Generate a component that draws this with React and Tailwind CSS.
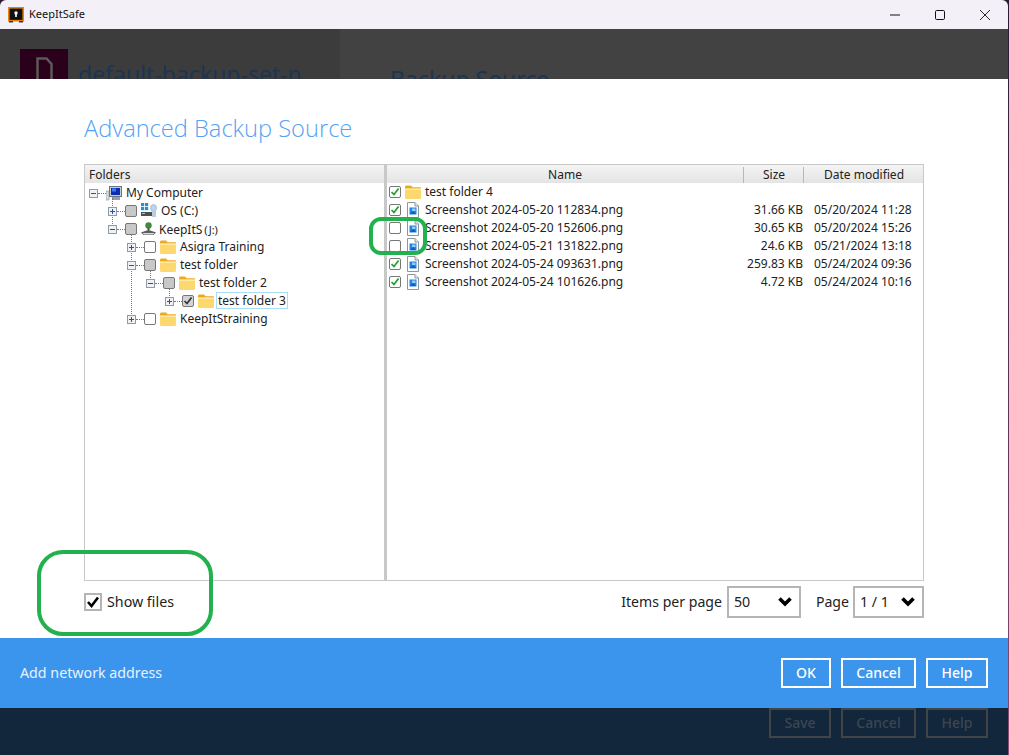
import React from "react";

function Expander({ open }) {
  return (
    <svg width="9" height="9" viewBox="0 0 9 9" className="relative shrink-0">
      <rect x="0.5" y="0.5" width="8" height="8" fill="#eef1f6" stroke="#8e9aa8" />
      <path d="M2 4.5H7" stroke="#2f4f9f" />
      {!open && <path d="M4.5 2V7" stroke="#2f4f9f" />}
    </svg>
  );
}

function Folder() {
  return (
    <svg width="16" height="14" viewBox="0 0 16 14" className="shrink-0">
      <path d="M0 2.2C0 1 .6.5 1.5.5H6l1.6 1.7H15c.6 0 1 .4 1 1V4H0Z" fill="#f0a91c" />
      <path d="M0 3.5H16V12.5C16 13.3 15.5 14 14.6 14H1.4C.5 14 0 13.3 0 12.5Z" fill="#fcd86f" />
      <path d="M0 3.5H16V5H0Z" fill="#ffe9a3" />
    </svg>
  );
}

function Computer() {
  return (
    <svg width="16" height="15" viewBox="0 0 16 15" className="shrink-0">
      <rect x="0" y="5" width="3" height="9" fill="#d8dde0" stroke="#7a8288" strokeWidth="0.5" />
      <rect x="3.5" y="0.5" width="12" height="10" fill="#c9ced4" stroke="#6c747b" />
      <rect x="5" y="2" width="9" height="7" fill="#0a2fb0" />
      <rect x="6" y="2.5" width="4" height="3" fill="#3f7fe8" />
      <rect x="6" y="11" width="8" height="3" fill="#9aa1a8" />
    </svg>
  );
}

function Drive() {
  return (
    <svg width="16" height="16" viewBox="0 0 16 16" className="shrink-0">
      <rect x="0" y="0" width="3.2" height="3.2" fill="#1f8fe0" />
      <rect x="4" y="0" width="3.2" height="3.2" fill="#1f8fe0" />
      <rect x="0" y="4" width="3.2" height="3.2" fill="#1f8fe0" />
      <rect x="4" y="4" width="3.2" height="3.2" fill="#1f8fe0" />
      <ellipse cx="12.5" cy="5" rx="3" ry="3.5" fill="#bfd4e6" stroke="#8fa6ba" strokeWidth="0.6" />
      <rect x="0" y="9" width="15" height="4" fill="#4a4f52" />
      <rect x="1" y="10" width="3" height="1" fill="#9be06a" />
      <rect x="11" y="7" width="4" height="7" fill="#b7cde0" />
    </svg>
  );
}

function NetDrive() {
  return (
    <svg width="15" height="15" viewBox="0 0 15 15" className="shrink-0">
      <circle cx="7.5" cy="3.5" r="3.2" fill="#3f8a3c" />
      <path d="M6.5 6H8.5V9H6.5Z" fill="#5a4a3a" />
      <path d="M0 10.5L5.5 8.5H9.5L15 10.5L12.5 13H2.5Z" fill="#5c5f60" />
      <path d="M1.5 11H13.5L12 12.5H3Z" fill="#d9dcdd" />
    </svg>
  );
}

function FileIcon() {
  return (
    <svg width="12" height="16" viewBox="0 0 12 16" className="shrink-0">
      <path d="M.5.5H8L11.5 4V15.5H.5Z" fill="#fff" stroke="#8b96a0" />
      <path d="M8 .5V4H11.5" fill="#e8ecef" stroke="#8b96a0" />
      <rect x="2.5" y="5.5" width="7" height="7" fill="#1f84e8" />
      <rect x="5" y="6.5" width="3.5" height="2.5" fill="#8fd0f8" />
      <path d="M3 12L6 9L9 12Z" fill="#1459c0" />
    </svg>
  );
}

function TreeCheck({ state }) {
  if (state === "partial") {
    return <span className="block w-3 h-3 shrink-0 rounded-[2px] border border-[#777] bg-[#c8c8c8]" />;
  }
  if (state === "dark") {
    return (
      <span className="flex items-center justify-center w-3 h-3 shrink-0 rounded-[2px] border border-[#777] bg-[#d4d4d4]">
        <svg width="10" height="10" viewBox="0 0 10 10"><path d="M1.5 5L4 7.5L8.5 1.5" fill="none" stroke="#333" strokeWidth="1.7" /></svg>
      </span>
    );
  }
  if (state === "green") {
    return (
      <span className="flex items-center justify-center w-3 h-3 shrink-0 rounded-[2px] border border-[#777] bg-white">
        <svg width="10" height="10" viewBox="0 0 10 10"><path d="M1.5 5L4 7.5L8.5 1.5" fill="none" stroke="#1f9d2e" strokeWidth="1.7" /></svg>
      </span>
    );
  }
  return <span className="block w-3 h-3 shrink-0 rounded-[2px] border border-[#777] bg-white" />;
}

function TreeRow({ pad, open, check, icon, label, selected, noCheck, tight }) {
  return (
    <div className="flex items-center h-[18px]" style={{ paddingLeft: pad }}>
      <Expander open={open} />
      <span className="w-2 shrink-0 border-t border-dotted border-[#777]" />
      {!noCheck && <TreeCheck state={check} />}
      {noCheck ? null : <span className="w-1 shrink-0" />}
      {icon}
      {selected ? (
        <span className="ml-[2px] -mt-[1px] px-[1px] h-[17px] leading-[15px] border border-[#a9dcf5] whitespace-nowrap">{label}</span>
      ) : tight ? (
        <span className="ml-[3px] mt-[2px] whitespace-nowrap">{label}</span>
      ) : (
        <span className="ml-1 whitespace-nowrap">{label}</span>
      )}
    </div>
  );
}

function FileRow({ check, name, size, date, folder }) {
  return (
    <div className="flex items-center h-[18px]">
      <div className="flex items-center w-[357px] pl-[2px]">
        <TreeCheck state={check} />
        {folder ? (
          <span className="ml-1 mr-1"><Folder /></span>
        ) : (
          <span className="ml-[6px] mr-[6px]"><FileIcon /></span>
        )}
        <span className="whitespace-nowrap">{name}</span>
      </div>
      <div className="w-[59px] text-right whitespace-nowrap">{size}</div>
      <div className="flex-1 pl-[11px] whitespace-nowrap">{date}</div>
    </div>
  );
}

function Select({ value, width }) {
  return (
    <div className={`flex items-center justify-between h-8 border-2 border-[#b5b5b5] pl-[5px] pr-[7px] ${width}`}>
      <span>{value}</span>
      <svg width="14" height="10" viewBox="0 0 14 10"><path d="M1.5 1.5L7 7L12.5 1.5" fill="none" stroke="#000" strokeWidth="3.6" /></svg>
    </div>
  );
}

const files = [
  ["green", "Screenshot 2024-05-20 112834.png", "31.66 KB", "05/20/2024 11:28"],
  ["empty", "Screenshot 2024-05-20 152606.png", "30.65 KB", "05/20/2024 15:26"],
  ["empty", "Screenshot 2024-05-21 131822.png", "24.6 KB", "05/21/2024 13:18"],
  ["green", "Screenshot 2024-05-24 093631.png", "259.83 KB", "05/24/2024 09:36"],
  ["green", "Screenshot 2024-05-24 101626.png", "4.72 KB", "05/24/2024 10:16"],
];

export default function App() {
  return (
    <div className="relative flex w-[1009px] h-[755px] overflow-hidden bg-gradient-to-b from-[#2a1a35] to-[#8c4a72] font-['Noto_Sans',sans-serif] text-[#222]">
      <div className="flex flex-col w-[1008px] h-full rounded-t-[6px] overflow-hidden">
        {/* title bar */}
        <div className="flex items-center h-[29px] shrink-0 bg-[#f4f0f8] pl-2">
          <svg width="16" height="16" viewBox="0 0 16 16" className="shrink-0">
            <rect x="0.8" y="0.8" width="14.4" height="12.9" fill="#111" stroke="#e8820c" strokeWidth="1.6" />
            <path d="M1 14H5V15.5H1ZM11 14H15V15.5H11Z" fill="#333" />
            <circle cx="8" cy="6" r="1.7" fill="#fff" />
            <rect x="7.2" y="6.5" width="1.6" height="3.5" fill="#fff" />
          </svg>
          <span className="ml-[5px] text-[11px] text-[#111]">KeepItSafe</span>
          <div className="ml-auto flex items-center gap-[35px] pr-[18px]">
            <svg width="10" height="10" viewBox="0 0 10 10"><path d="M0 5H10" stroke="#111" strokeWidth="1" /></svg>
            <svg width="10" height="10" viewBox="0 0 10 10"><rect x="0.5" y="0.5" width="9" height="9" rx="1.2" fill="none" stroke="#111" /></svg>
            <svg width="10" height="10" viewBox="0 0 10 10"><path d="M0 0L10 10M10 0L0 10" stroke="#111" strokeWidth="0.9" /></svg>
          </div>
        </div>

        {/* dimmed window behind the dialog */}
        <div className="flex h-[50px] shrink-0 overflow-hidden bg-[#424242]">
          <div className="flex w-[340px] shrink-0 bg-[#3c3c3c] pl-5 pt-5">
            <div className="flex justify-center w-12 h-12 shrink-0 bg-[#2a001a] pt-2">
              <svg width="17" height="26" viewBox="0 0 17 26"><path d="M1.5 1.5H10.5L15.5 7V24.5H1.5Z" fill="none" stroke="#5a5a5a" strokeWidth="2.5" /></svg>
            </div>
            <span className="ml-[10px] mt-[9px] text-[23px] leading-8 whitespace-nowrap text-[#1c3552]">default-backup-set-n</span>
          </div>
          <span className="ml-[50px] mt-[34px] text-[23px] leading-8 whitespace-nowrap text-[#1c3552]">Backup Source</span>
        </div>

        {/* dialog body */}
        <div className="flex flex-col h-[559px] shrink-0 bg-white px-[84px]">
          <h1 className="h-[85px] shrink-0 pt-[31px] text-[23.65px] leading-9 font-light text-[#52a3f5] font-['Open_Sans',sans-serif]">Advanced Backup Source</h1>

          <div className="flex h-[417px] shrink-0 border border-[#c8c8c8] text-xs">
            {/* tree */}
            <div className="relative w-[299px] shrink-0">
              <span className="absolute left-[27px] top-[33px] h-[28px] border-l border-dotted border-[#777]" />
              <span className="absolute left-[46px] top-[70px] h-[83px] border-l border-dotted border-[#777]" />
              <span className="absolute left-[65px] top-[105px] h-[10px] border-l border-dotted border-[#777]" />
              <span className="absolute left-[84px] top-[123px] h-[10px] border-l border-dotted border-[#777]" />
              <div className="flex items-center h-[18px] pl-1 pt-[2px] bg-gradient-to-b from-[#f4f4f4] to-[#e4e4e4]">Folders</div>
              <div className="pt-[1px]">
                <TreeRow pad={4} open noCheck icon={<Computer />} label="My Computer" />
                <TreeRow pad={23} check="partial" icon={<Drive />} label="OS (C:)" />
                <TreeRow pad={23} open check="partial" icon={<NetDrive />} tight label={<span>KeepItS<span className="ml-[2px] text-[11px]">(J:)</span></span>} />
                <TreeRow pad={42} check="empty" icon={<Folder />} label="Asigra Training" />
                <TreeRow pad={42} open check="partial" icon={<Folder />} label="test folder" />
                <TreeRow pad={61} open check="partial" icon={<Folder />} label="test folder 2" />
                <TreeRow pad={80} check="dark" icon={<Folder />} label="test folder 3" selected />
                <TreeRow pad={42} check="empty" icon={<Folder />} label="KeepItStraining" />
              </div>
            </div>
            {/* splitter */}
            <div className="w-[3px] shrink-0 bg-[#c8c8c8]" />
            {/* file list */}
            <div className="flex-1 min-w-0">
              <div className="flex items-center h-[18px] pt-[2px] bg-gradient-to-b from-[#f4f4f4] to-[#e4e4e4] text-center">
                <div className="w-[357px] border-r border-[#b8b8b8]">Name</div>
                <div className="w-[60px] border-r border-[#b8b8b8] pl-[1px]">Size</div>
                <div className="flex-1 pl-[1px]">Date modified</div>
              </div>
              <FileRow folder check="green" name="test folder 4" />
              {files.map((f) => (
                <FileRow key={f[1]} check={f[0]} name={f[1]} size={f[2]} date={f[3]} />
              ))}
            </div>
          </div>

          {/* controls under the panels */}
          <div className="flex items-center h-[42px] text-[14.25px]">
            <span className="flex items-center justify-center w-[18px] h-[18px] border-2 border-[#b5b5b5]">
              <svg width="14" height="12" viewBox="0 0 14 12"><path d="M2 6L5.5 10L12 1.5" fill="none" stroke="#000" strokeWidth="2.6" /></svg>
            </span>
            <span className="ml-[5px] -mt-[1px]">Show files</span>
            <div className="ml-auto flex items-center">
              <span className="-mt-[1px] text-[14.1px]">Items per page</span>
              <span className="ml-[5px]"><Select value="50" width="w-[74px]" /></span>
              <span className="ml-[15px] -mt-[1px] text-[14.1px]">Page</span>
              <span className="ml-[4px]"><Select value="1 / 1" width="w-[71px]" /></span>
            </div>
          </div>
        </div>

        {/* blue footer */}
        <div className="flex items-center h-[70px] shrink-0 bg-[#3b95ed] px-5 text-[14.25px] text-[#e8f2fd]">
          <span>Add network address</span>
          <div className="ml-auto flex items-center gap-[10px] text-sm font-medium text-white">
            <span className="flex items-center justify-center w-[50px] h-[30px] border-2 border-white">OK</span>
            <span className="flex items-center justify-center w-[75px] h-[30px] border-2 border-white">Cancel</span>
            <span className="flex items-center justify-center w-[62px] h-[30px] border-2 border-white">Help</span>
          </div>
        </div>

        {/* dark footer behind */}
        <div className="flex justify-end flex-1 bg-[#12263c] pr-5 gap-[10px] text-sm font-medium text-[#3d4650]">
          <span className="flex items-center justify-center w-[62px] h-[30px] border-2 border-[#414548]">Save</span>
          <span className="flex items-center justify-center w-[75px] h-[30px] border-2 border-[#414548]">Cancel</span>
          <span className="flex items-center justify-center w-[62px] h-[30px] border-2 border-[#414548]">Help</span>
        </div>
      </div>

      {/* hand-drawn green annotations lying over the screenshot */}
      <span className="absolute left-[369px] top-[217px] w-[58px] h-[38px] border-[4px] border-[#22b14c] rounded-[12px]" />
      <span className="absolute left-[37px] top-[550px] w-[176px] h-[86px] border-[4px] border-[#22b14c] rounded-[26px]" />
    </div>
  );
}
